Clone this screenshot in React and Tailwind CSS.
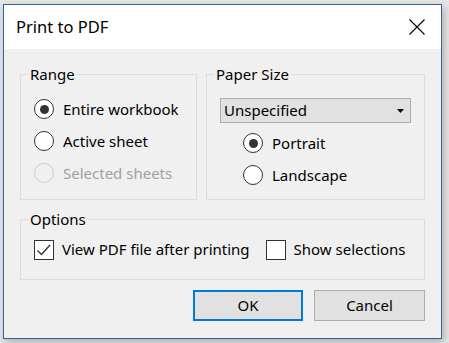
import React from 'react'

function Radio({ checked, disabled, label }) {
  return (
    <div className="flex h-[32px] items-center gap-[9px]">
      <span
        className={`flex h-5 w-5 items-center justify-center rounded-full border ${
          disabled ? 'border-[#cccccc] bg-[#f0f0f0]' : 'border-[#333333] bg-white'
        }`}
      >
        {checked && <span className="h-[9px] w-[9px] rounded-full bg-[#333333]" />}
      </span>
      <span className={disabled ? 'text-[#a0a0a0]' : 'text-black'}>{label}</span>
    </div>
  )
}

function Checkbox({ checked, label }) {
  return (
    <div className="flex items-center gap-[8px]">
      <span className="flex h-5 w-5 items-center justify-center border border-[#333333] bg-white">
        {checked && (
          <svg width="18" height="18" viewBox="0 0 18 18" fill="none">
            <path d="M2.5 9.5 L6.5 13.5 L15 4" stroke="#333333" strokeWidth="1.4" />
          </svg>
        )}
      </span>
      <span>{label}</span>
    </div>
  )
}

function Group({ title, className, children }) {
  return (
    <fieldset className={`border border-[#dcdcdc] p-0 ${className}`}>
      <legend className="ml-[7px] px-[2px] leading-5">{title}</legend>
      {children}
    </fieldset>
  )
}

export default function App() {
  return (
    <div className="h-[343px] w-[449px] bg-[#e6e6e6] pl-[3px] pt-[4px] font-['Noto_Sans',sans-serif] text-[15px] text-black">
      <div className="flex h-[335px] w-[439px] flex-col border border-[#2b64a3] bg-[#f0f0f0] shadow-[2px_3px_8px_rgba(0,0,0,0.25)]">
        <div className="flex h-[44px] items-center justify-between bg-white pl-3 pr-[16px]">
          <span className="text-[16.5px]">Print to PDF</span>
          <svg width="16" height="16" viewBox="0 0 16 16">
            <path d="M0.5 0.5 L15.5 15.5 M15.5 0.5 L0.5 15.5" stroke="#000" strokeWidth="1.1" />
          </svg>
        </div>

        <div className="flex flex-col px-4 pt-[15px]">
          <div className="flex gap-[9px]">
            <Group title="Range" className="h-[136px] w-[177px]">
              <div className="pl-[13px] pt-[9px]">
                <Radio checked label="Entire workbook" />
                <Radio label="Active sheet" />
                <Radio disabled label="Selected sheets" />
              </div>
            </Group>
            <Group title="Paper Size" className="h-[136px] w-[219px]">
              <div className="px-[13px] pt-[14px]">
                <div className="flex h-[25px] items-center justify-between border border-[#adadad] bg-[#e1e1e1] pl-[3px] pr-[6px]">
                  <span>Unspecified</span>
                  <svg width="7" height="4" viewBox="0 0 7 4">
                    <polygon points="0,0 7,0 3.5,4" fill="#000" />
                  </svg>
                </div>
                <div className="pl-[23px] pt-[4px]">
                  <Radio checked label="Portrait" />
                  <Radio label="Landscape" />
                </div>
              </div>
            </Group>
          </div>

          <Group title="Options" className="mt-[9px] h-[71px] w-[405px]">
            <div className="flex h-[41px] items-center gap-[16px] pl-[13px]">
              <Checkbox checked label="View PDF file after printing" />
              <Checkbox label="Show selections" />
            </div>
          </Group>

          <div className="mt-[10px] flex justify-end gap-[11px]">
            <button className="h-[31px] w-[110px] border-2 border-[#0078d7] bg-[#e1e1e1]">OK</button>
            <button className="h-[31px] w-[111px] border border-[#adadad] bg-[#e1e1e1]">Cancel</button>
          </div>
        </div>
      </div>
    </div>
  )
}
